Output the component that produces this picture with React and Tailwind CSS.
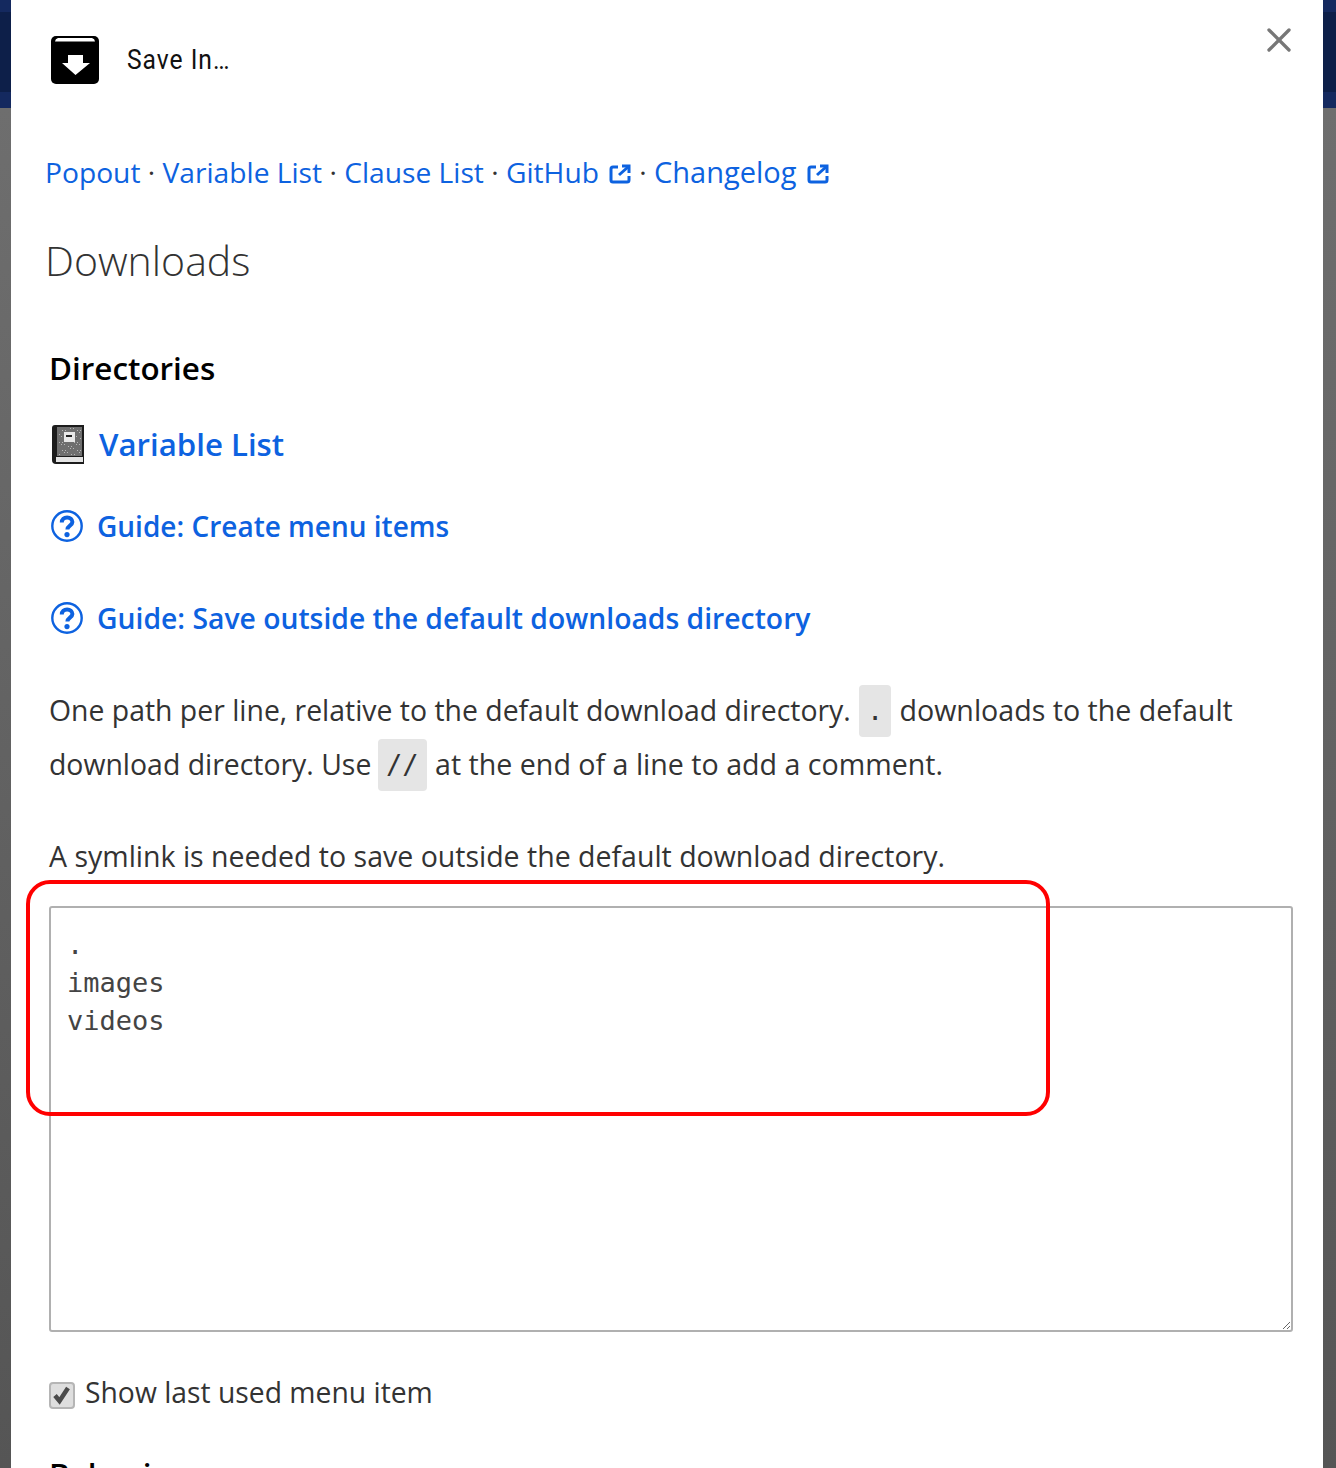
import React from 'react';
import { X } from 'lucide-react';

function Strip({ width }) {
  return (
    <div className={`${width} shrink-0 flex flex-col`}>
      <div className="h-[12px] bg-[#14295f]" />
      <div className="h-[80px] bg-[#0d1f49]" />
      <div className="h-[16px] bg-[#14295f]" />
      <div className="flex-1 bg-gradient-to-b from-[#6e6e6e] to-[#555555]" />
    </div>
  );
}

function ExternalIcon() {
  return (
    <svg viewBox="0 0 22 20" className="w-[22px] h-[20px] inline-block ml-[10px] align-[-1px]" fill="none" stroke="#0d62e0" strokeWidth="3">
      <path d="M9 3H4a2 2 0 0 0-2 2v11a2 2 0 0 0 2 2h14a2 2 0 0 0 2-2v-4" />
      <path d="M10 11 19 3" />
      <path d="M13 2h7v7" />
    </svg>
  );
}

function HelpIcon() {
  return (
    <svg viewBox="0 0 32 32" className="w-[32px] h-[32px] shrink-0" fill="none" stroke="#0d62e0">
      <circle cx="16" cy="16" r="14.7" strokeWidth="2.4" />
      <path d="M10.800 12.400c0-3.200 2.300-5 5.300-5s5.300 1.800 5.300 4.700c0 3.500-5 3.700-5 7.400" strokeWidth="4" />
      <circle cx="16" cy="24.600" r="2.600" fill="#0d62e0" stroke="none" />
    </svg>
  );
}

const speckles = [];
for (let y = 3; y < 31; y += 2) {
  for (let x = 6 + (y % 4); x < 30; x += 3) {
    if ((x * 7 + y * 13) % 5 < 2) speckles.push([x, y]);
  }
}

function BookIcon() {
  return (
    <svg viewBox="0 0 32 39" className="w-[32px] h-[39px] shrink-0">
      <path d="M3 0h29v39H4a4 4 0 0 1-4-4V3a3 3 0 0 1 3-3z" fill="#1c1c1c" />
      <rect x="5" y="2" width="25" height="29" fill="#6f6f6f" />
      {speckles.map(([x, y]) => (
        <rect key={`${x}-${y}`} x={x} y={y} width="1" height="1" fill="#b8b8b8" />
      ))}
      <rect x="12" y="7" width="11" height="10" fill="#e8e8e8" />
      <rect x="14" y="10" width="6" height="2" fill="#222222" />
      <rect x="4" y="32" width="27" height="5" fill="#e4e4e4" />
    </svg>
  );
}

function SaveIcon() {
  return (
    <svg viewBox="0 0 48 48" className="w-[48px] h-[48px] shrink-0">
      <path d="M5 0h38a5 5 0 0 1 5 5v38a5 5 0 0 1-5 5H5a5 5 0 0 1-5-5V5a5 5 0 0 1 5-5z" fill="#000000" />
      <path d="M7 2h34a4 4 0 0 1 3 3.500H4A4 4 0 0 1 7 2z" fill="#ffffff" />
      <path d="M17 19h15v8h7L24.500 39 11 27h6z" fill="#ffffff" />
    </svg>
  );
}

function Code({ children, w }) {
  return (
    <code className={`inline-block h-[52px] -my-[6px] -translate-y-[2px] leading-[52px] align-middle text-center bg-[#e5e5e5] rounded-[4px] text-[#333333] font-['DejaVu_Sans_Mono',monospace] text-[27px] ${w}`}>
      {children}
    </code>
  );
}

const linkClass = 'text-[#0d62e0]';

export default function App() {
  return (
    <div className="flex h-[1468px] overflow-hidden bg-white font-['Open_Sans','Noto_Sans',sans-serif] relative">
      <Strip width="w-[11px]" />
      <div className="flex-1 relative px-[38px] overflow-hidden">
        {/* Header */}
        <div className="flex items-center h-[48px] mt-[36px]">
          <div className="ml-[2px]"><SaveIcon /></div>
          <span className="ml-[28px] font-['Roboto',sans-serif] text-[28px] text-[#111111] tracking-[1.100px] scale-x-[0.88] origin-left">Save In…</span>
        </div>
        <button className="absolute top-[20px] right-[24px] text-[#777777]">
          <X size={40} strokeWidth={2} />
        </button>

        {/* Top links */}
        <div className="mt-[68px] -ml-[4px] h-[40px] leading-[40px] text-[28.2px] text-[#333333] whitespace-nowrap">
          <span className={linkClass}>Popout</span> · <span className={linkClass}>Variable List</span> · <span className={linkClass}>Clause List</span> · <span className={linkClass}>GitHub<ExternalIcon /></span><span className="ml-[1px]"> · </span><span className={`${linkClass} text-[29px]`}>Changelog<ExternalIcon /></span>
        </div>

        <h1 className="mt-[38px] -ml-[4px] h-[60px] leading-[60px] text-[41px] font-light text-[#333333]">Downloads</h1>

        <h2 className="mt-[56px] h-[44px] leading-[44px] text-[31.400px] font-semibold text-black">Directories</h2>

        <div className="mt-[32px] flex items-center gap-[15px] ml-[3px] h-[44px]">
          <BookIcon />
          <span className={`${linkClass} text-[31.200px] font-semibold`}>Variable List</span>
        </div>

        <div className="mt-[40px] flex items-center gap-[14px] ml-[2px] h-[40px]">
          <HelpIcon />
          <span className={`${linkClass} text-[28px] font-semibold`}>Guide: Create menu items</span>
        </div>

        <div className="mt-[52px] flex items-center gap-[14px] ml-[2px] h-[40px]">
          <HelpIcon />
          <span className={`${linkClass} text-[28.300px] font-semibold`}>Guide: Save outside the default downloads directory</span>
        </div>

        <p className="mt-[45px] text-[28.400px] leading-[54px] text-[#333333] whitespace-nowrap">
          One path per line, relative to the default download directory. <Code w="w-[32px] ml-[1px] mr-[1px]">.</Code> <span className="text-[28.600px]">downloads to the default</span>
          <br />
          download directory. Use <Code w="w-[49px] -ml-[1px] mr-[1px]">//</Code> <span className="text-[28.600px]">at the end of a line to add a comment.</span>
        </p>

        <p className="mt-[38px] text-[28.500px] leading-[54px] text-[#333333] whitespace-nowrap">A symlink is needed to save outside the default download directory.</p>

        <textarea
          readOnly
          defaultValue={'.\nimages\nvideos'}
          className="block mt-[23px] w-[1244px] h-[426px] border-2 border-[#b0b0b0] rounded-[3px] pt-[18px] px-[16px] outline-none resize text-[#444444] font-['DejaVu_Sans_Mono',monospace] text-[27px] leading-[38px]"
        />

        <div className="mt-[40px] flex items-center h-[40px]">
          <div className="w-[26px] h-[27px] shrink-0 mt-[6px] rounded-[4px] border-2 border-[#b5b5b5] bg-[#dedede] flex items-center justify-center">
            <svg viewBox="0 0 20 20" className="w-[20px] h-[20px]" fill="none" stroke="#4a4a4a" strokeWidth="4.500">
              <path d="M3 10.500l4.500 5.500L16 3" />
            </svg>
          </div>
          <span className="ml-[10px] text-[28.300px] text-[#333333] whitespace-nowrap">Show last used menu item</span>
        </div>

        <h2 className="mt-[40px] h-[44px] leading-[44px] text-[31.400px] font-semibold text-black">Behavior</h2>

        {/* Red annotation drawn over the textarea */}
        <div className="absolute left-[15px] top-[880px] w-[1024px] h-[236px] border-[4px] border-[#ff0000] rounded-[24px] pointer-events-none" />
      </div>
      <Strip width="w-[13px]" />
    </div>
  );
}
